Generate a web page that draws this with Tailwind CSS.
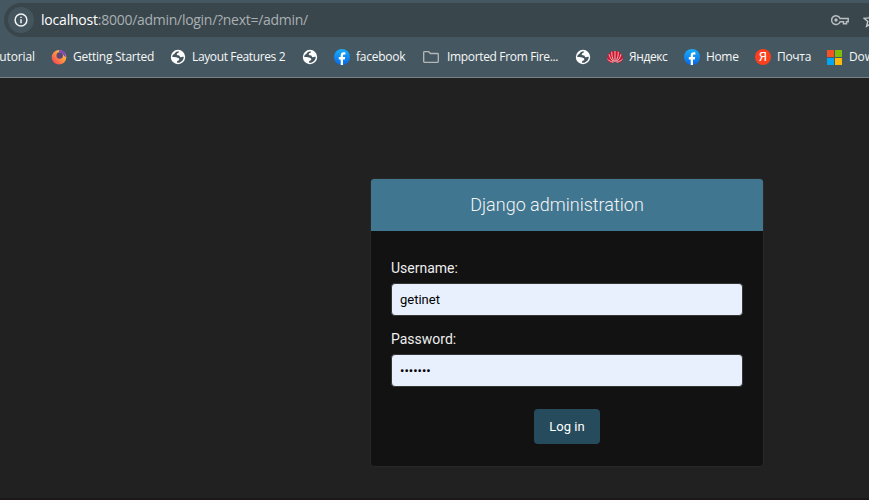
<!DOCTYPE html>
<html lang="en">
<head>
<meta charset="utf-8">
<title>Log in | Django site admin</title>
<script src="https://cdn.jsdelivr.net/npm/@tailwindcss/browser@4"></script>
</head>
<body class="w-[869px] h-[500px] overflow-hidden bg-[#212121] flex flex-col font-['Roboto',sans-serif]">
<svg class="absolute w-0 h-0">
  <defs>
    <linearGradient id="fb" x1="0" y1="0" x2="0" y2="1"><stop offset="0" stop-color="#19aefb"/><stop offset="1" stop-color="#0668e8"/></linearGradient>
    <linearGradient id="ff" x1="1" y1="0" x2="0" y2="1"><stop offset="0" stop-color="#ffd84a"/><stop offset=".45" stop-color="#ff9640"/><stop offset="1" stop-color="#f5305c"/></linearGradient>
    <symbol id="globe" viewBox="0 0 16 16"><circle cx="8" cy="8" r="7.200" fill="#fff"/><path d="M9.200 2.500c-.2 1.600-2.500 1.300-2.500 2.800 0 1.400 3.100.6 3.100 2.100 0 .8 1.100.8 2.200.7.900-.1 1.400-.5 1.800-.1-.2 2.700-1.800 4.600-3.900 5.400-.9.300-2.200.4-3 .1 0-1.100.4-1.600 1.400-1.900 1.200-.4 1.300-1.500.5-2.300C7.700 8.200 5 8.200 2.200 8c.1-.9.400-1.600.7-2.300C4.800 5.500 4.600 3.400 6.500 2.700c.8-.3 1.800-.4 2.700-.2z" fill="#45555e"/></symbol>
    <symbol id="facebook" viewBox="0 0 16 16"><circle cx="8" cy="8" r="8" fill="url(#fb)"/><path d="M6.700 16v-5.500H4.800V8h1.900V6.600c0-2.200 1.100-3.300 3-3.300.6 0 1.200.1 1.700.2v2.100h-1c-1.100 0-1.400.5-1.400 1.200V8h2.200l-.4 2.500H9V16z" fill="#fff"/></symbol>
  </defs>
</svg>
<header class="h-[78px] shrink-0 bg-[#455760] border-b border-[#76848a] flex flex-col pt-[3px] font-['Open_Sans','Noto_Sans',sans-serif]">
  <div class="ml-1 h-[34px] shrink-0 rounded-l-full bg-[#39464c] flex items-center pl-1 overflow-hidden">
    <span class="w-[26px] h-[26px] shrink-0 rounded-full bg-[#45555e] flex items-center justify-center">
      <svg class="w-[14px] h-[14px]" viewBox="0 0 14 14" fill="none" stroke="#f1f3f4" stroke-width="1.500"><circle cx="7" cy="7" r="5.900"/><path d="M7 6.300v3.900M7 3.800v1.300"/></svg>
    </span>
    <span class="ml-[7px] w-[780px] shrink-0 whitespace-nowrap text-[14px] leading-5 text-[#a9b0b3]"><span class="text-white tracking-[-0.2px]">localhost</span><span class="tracking-[-0.28px]">:8000/admin/login/?next=/admin/</span></span>
    <svg class="ml-[10px] w-[18px] h-[12px] shrink-0" viewBox="0 0 18 12" fill="none" stroke="#b9bec0" stroke-width="1.500"><path d="M9.100 4.500A4.400 4.400 0 1 0 9.100 7.800H12.500v2h3v-2h1.700V4.500z"/><circle cx="5" cy="6" r="1.700" fill="#b9bec0" stroke="none"/></svg>
    <svg class="ml-[14px] w-4 h-4 shrink-0" viewBox="0 0 16 16" fill="none" stroke="#c2c7c9" stroke-width="1.400"><path d="M8 1.400l2 4.500 5 .4-3.800 3.200 1.200 4.800L8 11.700l-4.400 2.600 1.200-4.800L1 6.300l5-.4z"/></svg>
  </div>
  <nav class="h-[40px] flex items-center text-[12px] leading-4 text-[#f6f8f8] whitespace-nowrap overflow-hidden">
    <div class="w-[51px] shrink-0 flex"><div class="w-[35px] flex justify-end overflow-hidden"><span class="tracking-[-0.1px]">Tutorial</span></div></div>
    <div class="w-[119px] shrink-0 flex items-center gap-1.5">
      <svg class="w-4 h-4 shrink-0" viewBox="0 0 16 16"><circle cx="8" cy="8.300" r="7.300" fill="url(#ff)"/><path d="M8 1.500C11 .2 15.200 3 14.800 8c-.8 0-2-1.200-2.500-2.300C11.500 4 10 3 8 3z" fill="#7f43c8"/><circle cx="8.700" cy="6.500" r="3.200" fill="#5a4777"/></svg>
      <span class="tracking-[-0.25px]">Getting Started</span></div>
    <div class="w-[132px] shrink-0 flex items-center gap-1.5"><svg class="w-4 h-4 shrink-0"><use href="#globe"/></svg><span class="tracking-[-0.37px]">Layout Features 2</span></div>
    <div class="w-[32px] shrink-0 flex items-center"><svg class="w-4 h-4 shrink-0"><use href="#globe"/></svg></div>
    <div class="w-[89px] shrink-0 flex items-center gap-1.5"><svg class="w-4 h-4 shrink-0"><use href="#facebook"/></svg><span class="tracking-[-0.25px]">facebook</span></div>
    <div class="w-[152px] shrink-0 flex items-center gap-2"><svg class="w-4 h-4 shrink-0" viewBox="0 0 16 16" fill="none" stroke="#b5b8ba" stroke-width="1.300"><path d="M.7 12.500v-9c0-.5.300-.8.800-.8h4.200l1.700 1.800h7.100c.5 0 .8.300.8.800v7.200c0 .5-.3.800-.8.800h-13c-.5 0-.8-.3-.8-.8z"/></svg><span class="tracking-[-0.34px]">Imported From Fire...</span></div>
    <div class="w-[32px] shrink-0 flex items-center"><svg class="w-4 h-4 shrink-0"><use href="#globe"/></svg></div>
    <div class="w-[77px] shrink-0 flex items-center gap-1.5"><svg class="w-4 h-4 shrink-0" viewBox="0 0 16 16"><path d="M8 2C4 1.500.3 5 .2 9c0 3 2.500 5 5 5L8 12.500 10.800 14c2.500 0 5-2 5-5C15.700 5 12 1.500 8 2z" fill="#d0142c"/><g fill="none" stroke="#eadfe2" stroke-width=".8"><path d="M8 2v10.500M7.300 12.500C5.300 9.500 4.500 6 4.800 2.800M8.700 12.500c2-3 2.800-6.500 2.500-9.700M6.500 12.700C4.300 10.800 2.700 8.500 2 5.200M9.500 12.700c2.200-1.900 3.800-4.200 4.500-7.500M6.300 13.200C4 12.800 2 11.800.4 10M9.700 13.200c2.300-.4 4.300-1.400 5.900-3.200"/></g></svg><span class="tracking-[-0.4px]">Яндекс</span></div>
    <div class="w-[71px] shrink-0 flex items-center gap-1.5"><svg class="w-4 h-4 shrink-0"><use href="#facebook"/></svg><span class="tracking-[-0.35px]">Home</span></div>
    <div class="w-[72px] shrink-0 flex items-center gap-1.5"><span class="w-4 h-4 shrink-0 rounded-full bg-[#fc3f1d] text-white text-[13px] leading-4 text-center font-['Roboto',sans-serif]">Я</span><span class="tracking-[-0.3px]">Почта</span></div>
    <div class="w-[120px] shrink-0 flex items-center gap-[7px]"><svg class="w-[15px] h-[15px] shrink-0" viewBox="0 0 15 15"><path fill="#f35325" d="M0 0h7v7H0z"/><path fill="#81bc06" d="M8 0h7v7H8z"/><path fill="#05a6f0" d="M0 8h7v7H0z"/><path fill="#ffba08" d="M8 8h7v7H8z"/></svg><span class="tracking-[-0.1px]">Downloads</span></div>
  </nav>
</header>
<main class="flex-1 pt-[100px] pl-[370px] border-b-2 border-[#1b171a]">
  <section class="w-[394px] h-[289px] border border-[#282828] rounded-[4px] overflow-hidden bg-[#121212] flex flex-col">
    <h1 class="h-[52px] shrink-0 bg-[#417690] flex items-center justify-center text-[18px] font-light text-[#f5f5f5] pr-5 pb-0.5"><span>Django administration</span></h1>
    <form class="px-5 pt-[28px] flex flex-col" onsubmit="return false">
      <label for="u" class="text-[14px] leading-[18px] text-[#eeeeee]">Username:</label>
      <input id="u" value="getinet" class="mt-[6px] h-[33px] w-full rounded-[4px] border border-[#353535] bg-[#e8f0fe] px-2 text-[13px] text-black">
      <label for="p" class="mt-[14px] text-[14px] leading-[18px] text-[#eeeeee]">Password:</label>
      <input id="p" type="password" value="1234567" class="mt-[6px] h-[33px] w-full rounded-[4px] border border-[#353535] bg-[#e8f0fe] px-2 text-[13px] text-black">
      <button class="mt-[22px] self-center w-[66px] h-[35px] rounded-[4px] bg-[#264b5d] text-white text-[13px]">Log in</button>
    </form>
  </section>
</main>
</body>
</html>
